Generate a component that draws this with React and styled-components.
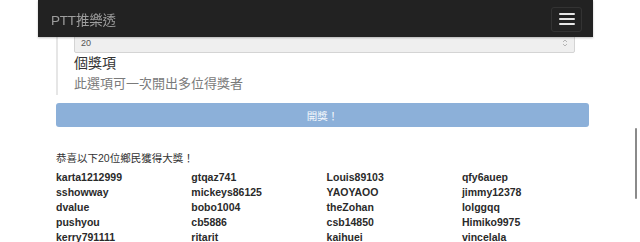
import React from 'react';
import styled, { createGlobalStyle } from 'styled-components';

const GlobalStyle = createGlobalStyle`
  html, body {
    margin: 0;
    padding: 0;
    background: #fff;
    font-family: "Liberation Sans", "Noto Sans CJK TC", sans-serif;
    color: #333;
    overflow: hidden;
  }
`;

// navbar sits fixed over the scrolled page
const Navbar = styled.nav`
  position: fixed;
  top: 0;
  left: 38px;
  width: 555px;
  height: 37px;
  background: #222;
  box-shadow: 0 1px 2px rgba(0, 0, 0, 0.25);
  display: flex;
  align-items: center;
  justify-content: space-between;
  padding: 0 11px 0 13px;
  box-sizing: border-box;
  z-index: 10;
`;

const Brand = styled.div`
  color: #9d9d9d;
  font-size: 13.5px;
  letter-spacing: -0.2px;
`;

const Toggle = styled.button`
  width: 31px;
  height: 25px;
  margin-top: 1px;
  background: transparent;
  border: 1px solid #333;
  border-radius: 3px;
  display: flex;
  flex-direction: column;
  align-items: center;
  justify-content: center;
  gap: 3px;
  padding: 0;
`;

const Bar = styled.span`
  display: block;
  width: 16px;
  height: 2px;
  border-radius: 1px;
  background: #e6e6e6;
`;

const Page = styled.main`
  padding: 0 51px 0 56px;
`;

const FormBlock = styled.div`
  margin-top: 20px;
  border-left: 2px solid #e6e6e6;
  padding: 7px 0 1px 16px;
`;

const NumberBox = styled.div`
  height: 26px;
  box-sizing: border-box;
  border: 1px solid #d4d4d4;
  border-radius: 2px;
  background: #efefef;
  display: flex;
  align-items: flex-end;
  justify-content: space-between;
  padding: 0 6px 4px 6px;
  margin-right: 14px;
  font-size: 9px;
  color: #555;
`;

const Spin = styled.svg`
  width: 6px;
  height: 8px;
  margin-bottom: 1px;
`;

const Label = styled.div`
  margin-top: 1px;
  font-size: 14px;
  line-height: 18px;
  color: #333;
`;

const Help = styled.div`
  margin-top: 2px;
  font-size: 13px;
  line-height: 20px;
  color: #7a7a7a;
`;

const DrawButton = styled.button`
  display: block;
  width: 100%;
  height: 24px;
  margin-top: 8px;
  border: none;
  border-radius: 3px;
  background: #8cb0d9;
  color: #f4f8fc;
  font-family: "Liberation Sans", "Noto Sans CJK TC", sans-serif;
  font-size: 10.5px;
  padding: 0;
`;

const ResultTitle = styled.div`
  margin-top: 23px;
  font-size: 10.5px;
  line-height: 16px;
  color: #333;
`;

const WinnerGrid = styled.div`
  margin-top: 4px;
  display: grid;
  grid-template-columns: repeat(4, 135.3px);
`;

const Winner = styled.div`
  font-size: 10.5px;
  font-weight: bold;
  line-height: 15px;
  color: #2a2a2a;
`;

const ScrollThumb = styled.div`
  position: fixed;
  right: 3px;
  top: 128px;
  width: 2px;
  height: 71px;
  background: #8a8a8a;
  border-radius: 1px;
`;

const winners = [
  'karta1212999', 'gtqaz741', 'Louis89103', 'qfy6auep',
  'sshowway', 'mickeys86125', 'YAOYAOO', 'jimmy12378',
  'dvalue', 'bobo1004', 'theZohan', 'lolggqq',
  'pushyou', 'cb5886', 'csb14850', 'Himiko9975',
  'kerry791111', 'ritarit', 'kaihuei', 'vincelala',
];

const App = () => {
  return (<>
    <GlobalStyle />
    <Navbar>
      <Brand>PTT推樂透</Brand>
      <Toggle aria-label="menu">
        <Bar />
        <Bar />
        <Bar />
      </Toggle>
    </Navbar>

    <Page>
      <FormBlock>
        <NumberBox>
          <span>20</span>
          <Spin viewBox="0 0 6 8">
            <path d="M1 3 L3 1 L5 3 M1 5 L3 7 L5 5" fill="none" stroke="#b5b5b5" strokeWidth="1" />
          </Spin>
        </NumberBox>
        <Label>個獎項</Label>
        <Help>此選項可一次開出多位得獎者</Help>
      </FormBlock>

      <DrawButton disabled>開獎！</DrawButton>

      <ResultTitle>恭喜以下20位鄉民獲得大獎！</ResultTitle>
      <WinnerGrid>
        {winners.map(name => <Winner key={name}>{name}</Winner>)}
      </WinnerGrid>
    </Page>

    <ScrollThumb />
  </>)
}

export default App;
